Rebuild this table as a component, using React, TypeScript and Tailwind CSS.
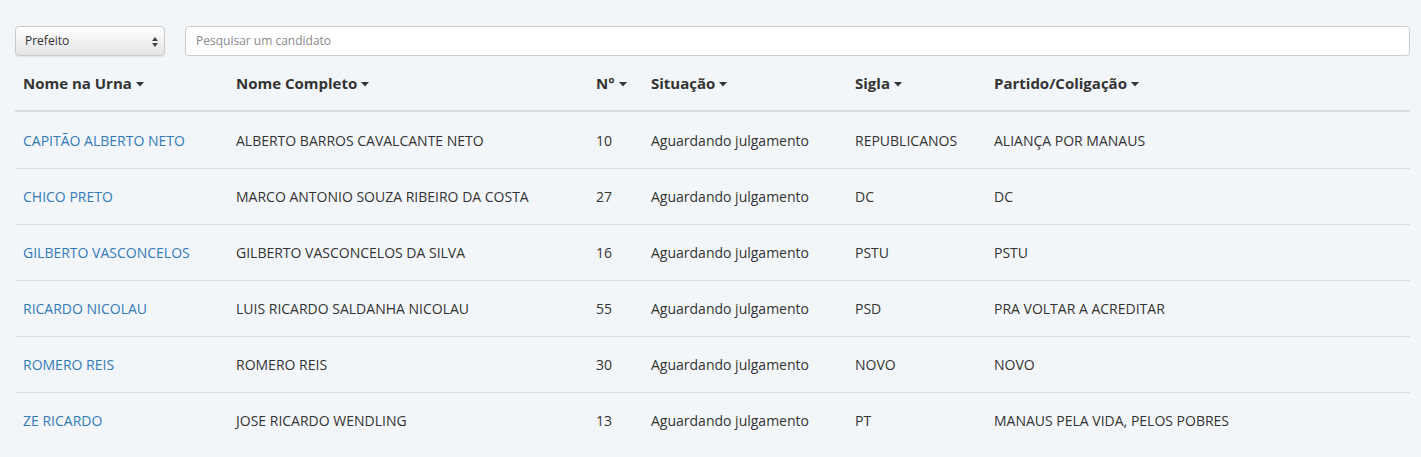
import React from "react";

const rows = [
  ["CAPITÃO ALBERTO NETO", "ALBERTO BARROS CAVALCANTE NETO", "10", "Aguardando julgamento", "REPUBLICANOS", "ALIANÇA POR MANAUS"],
  ["CHICO PRETO", "MARCO ANTONIO SOUZA RIBEIRO DA COSTA", "27", "Aguardando julgamento", "DC", "DC"],
  ["GILBERTO VASCONCELOS", "GILBERTO VASCONCELOS DA SILVA", "16", "Aguardando julgamento", "PSTU", "PSTU"],
  ["RICARDO NICOLAU", "LUIS RICARDO SALDANHA NICOLAU", "55", "Aguardando julgamento", "PSD", "PRA VOLTAR A ACREDITAR"],
  ["ROMERO REIS", "ROMERO REIS", "30", "Aguardando julgamento", "NOVO", "NOVO"],
  ["ZE RICARDO", "JOSE RICARDO WENDLING", "13", "Aguardando julgamento", "PT", "MANAUS PELA VIDA, PELOS POBRES"],
];

const widths = ["w-[213px]", "w-[360px]", "w-[55px]", "w-[204px]", "w-[139px]", "flex-1"];
const headers = ["Nome na Urna", "Nome Completo", "N°", "Situação", "Sigla", "Partido/Coligação"];

function Caret() {
  return (
    <svg width="8" height="5" viewBox="0 0 8 5" className="ml-[4px] mt-[3px] inline-block">
      <path d="M0 0 L8 0 L4 4.5 Z" fill="#333" />
    </svg>
  );
}

export default function App() {
  return (
    <div
      className="min-h-screen w-full bg-[#f3f6f9] pl-[15px] pr-[11px] pt-[26px] text-[#333]"
      style={{ fontFamily: '"Open Sans", "Liberation Sans", sans-serif' }}
    >
      <div className="flex h-[30px] gap-[20px]">
        <div className="relative flex h-[30px] w-[150px] items-center rounded-[4px] border border-[#c8c8c8] bg-gradient-to-b from-white to-[#e4e4e4] pl-[9px] text-[12px] text-[#333] shadow-[0_1px_1px_rgba(0,0,0,0.08)]">
          Prefeito
          <svg width="6" height="10" viewBox="0 0 6 10" className="absolute right-[6px] top-[10px]">
            <path d="M0 4 L3 0 L6 4 Z" fill="#444" />
            <path d="M0 6 L3 10 L6 6 Z" fill="#444" />
          </svg>
        </div>
        <div className="flex h-[30px] flex-1 items-center rounded-[4px] border border-[#ccc] bg-white pl-[10px] text-[12px] text-[#8a8a8a]">
          Pesquisar um candidato
        </div>
      </div>

      <div className="flex h-[56px] items-center border-b-2 border-[#ddd] text-[15px] font-bold">
        {headers.map((h, i) => (
          <div key={i} className={`${widths[i]} flex items-center px-[8px]`}>
            {h}
            <Caret />
          </div>
        ))}
      </div>

      {rows.map((r, ri) => (
        <div
          key={ri}
          className={`flex h-[56px] items-center text-[14px] ${ri > 0 ? "border-t border-[#ddd]" : ""}`}
        >
          {r.map((c, ci) => (
            <div
              key={ci}
              className={`${widths[ci]} px-[8px] ${ci === 0 ? "text-[#337ab7]" : "text-[#333]"}`}
            >
              {c}
            </div>
          ))}
        </div>
      ))}
    </div>
  );
}
